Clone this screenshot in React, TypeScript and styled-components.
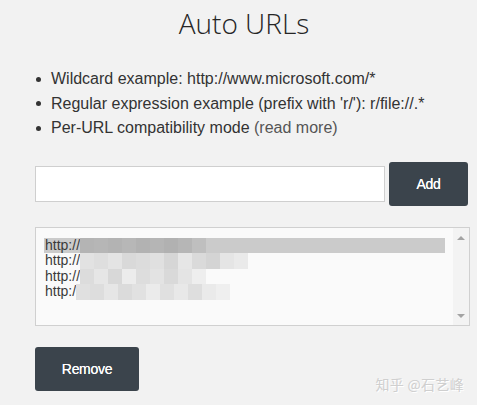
import React from 'react';
import styled, { createGlobalStyle } from 'styled-components';

const GlobalStyle = createGlobalStyle`
  html, body {
    margin: 0;
    padding: 0;
    background: #f2f2f2;
  }
  body {
    font-family: "Liberation Sans", Arial, sans-serif;
    color: #333;
  }
`;

const Page = styled.div`
  position: relative;
  width: 477px;
  height: 405px;
  padding-top: 4px;
  box-sizing: border-box;
  overflow: hidden;
`;

const Title = styled.h1`
  margin: 0;
  padding-left: 11px;
  text-align: center;
  font-family: "Open Sans", sans-serif;
  font-weight: 300;
  font-size: 28px;
  line-height: 38px;
  color: #262626;
`;

const Content = styled.div`
  padding-left: 35px;
`;

const Tips = styled.ul`
  list-style: none;
  margin: 25px 0 0;
  padding: 0;
`;

const Tip = styled.li`
  display: flex;
  align-items: center;
  gap: 10px;
  padding-left: 1px;
  font-size: 16px;
  line-height: 24.5px;
  color: #333;
`;

const Dot = styled.span`
  width: 5px;
  height: 5px;
  border-radius: 50%;
  background: #333;
  flex: none;
`;

const Link = styled.span`
  color: #555;
`;

const AddRow = styled.div`
  display: flex;
  align-items: center;
  gap: 4px;
  margin-top: 21px;
`;

const UrlInput = styled.input`
  width: 350px;
  height: 36px;
  box-sizing: border-box;
  border: 1px solid #cfcfcf;
  background: #fff;
  padding: 0 8px;
  font: 14px "Liberation Sans", Arial, sans-serif;
  outline: none;
`;

const DarkButton = styled.button<{ $w: number }>`
  width: ${(p) => p.$w}px;
  height: 44px;
  border: none;
  border-radius: 3px;
  background: #3b444c;
  color: #fff;
  font: 14px "Liberation Sans", Arial, sans-serif;
  letter-spacing: -0.3px;
  text-shadow: 0 0 0.4px #fff;
  cursor: pointer;
`;

const ListBox = styled.div`
  display: flex;
  width: 435px;
  height: 99px;
  margin-top: 21px;
  box-sizing: border-box;
  border: 1px solid #d0d0d0;
  background: #fafafa;
`;

const Items = styled.div`
  flex: 1;
  padding: 10px 8px 0 8px;
  overflow: hidden;
`;

const Item = styled.div<{ $selected?: boolean }>`
  display: flex;
  height: 15.5px;
  font-size: 14px;
  line-height: 15.5px;
  color: #3a3a3a;
  white-space: nowrap;
  background: ${(p) => (p.$selected ? '#cbcbcb' : 'transparent')};
  padding-left: 1px;
`;

const Mosaic = styled.span`
  display: inline-flex;
  height: 15.5px;
`;

const Cell = styled.span<{ $c: string }>`
  display: inline-block;
  width: 14px;
  height: 100%;
  background: ${(p) => p.$c};
`;

const ScrollBar = styled.div`
  width: 16px;
  display: flex;
  flex-direction: column;
  justify-content: space-between;
  align-items: center;
  padding: 8px 0 7px;
  background: #f3f3f3;
`;

const Arrow = styled.span<{ $down?: boolean }>`
  width: 0;
  height: 0;
  border-left: 4px solid transparent;
  border-right: 4px solid transparent;
  ${(p) =>
    p.$down ? 'border-top: 4px solid #a3a3a3;' : 'border-bottom: 4px solid #a3a3a3;'}
`;

const Footer = styled.div`
  margin-top: 21px;
`;

const Watermark = styled.div`
  position: absolute;
  right: 13px;
  bottom: 11px;
  font-family: "Noto Sans CJK SC", sans-serif;
  font-size: 14px;
  color: #cfcfcf;
  text-shadow: 1px 1px 0 #fff;
  letter-spacing: 0.3px;
`;

const rows: { prefix: string; cells: string[]; selected?: boolean }[] = [
  {
    prefix: 'http://',
    selected: true,
    cells: ['#b4b4b4', '#b6b6b6', '#b3b3b3', '#b7b7b7', '#b2b2b2', '#b5b5b5', '#b1b1b1', '#b6b6b6', '#bfbfbf'],
  },
  {
    prefix: 'http://',
    cells: ['#e2e2e2', '#dedede', '#e4e4e4', '#d9d9d9', '#dcdcdc', '#e0e0e0', '#d6d6d6', '#e6e6e6', '#dadada', '#d4d4d4', '#e5e5e5', '#eaeaea'],
  },
  {
    prefix: 'http://',
    cells: ['#dcdcdc', '#e6e6e6', '#d8d8d8', '#ececec', '#dddddd', '#e3e3e3', '#d9d9d9', '#e4e4e4', '#eeeeee'],
  },
  {
    prefix: 'http:/',
    cells: ['#e0e0e0', '#dddddd', '#e6e6e6', '#dbdbdb', '#e1e1e1', '#ebebeb', '#e0e0e0', '#e8e8e8', '#dedede', '#eaeaea', '#efefef'],
  },
];

export default function App() {
  return (
    <>
      <GlobalStyle />
      <Page>
        <Title>Auto URLs</Title>
        <Content>
          <Tips>
            <Tip>
              <Dot />
              Wildcard example: http://www.microsoft.com/*
            </Tip>
            <Tip>
              <Dot />
              Regular expression example (prefix with 'r/'): r/file://.*
            </Tip>
            <Tip>
              <Dot />
              <span>
                Per-URL compatibility mode <Link>(read more)</Link>
              </span>
            </Tip>
          </Tips>
          <AddRow>
            <UrlInput type="text" />
            <DarkButton $w={79}>Add</DarkButton>
          </AddRow>
          <ListBox>
            <Items>
              {rows.map((r, i) => (
                <Item key={i} $selected={r.selected}>
                  {r.prefix}
                  <Mosaic>
                    {r.cells.map((c, j) => (
                      <Cell key={j} $c={c} />
                    ))}
                  </Mosaic>
                </Item>
              ))}
            </Items>
            <ScrollBar>
              <Arrow />
              <Arrow $down />
            </ScrollBar>
          </ListBox>
          <Footer>
            <DarkButton $w={104}>Remove</DarkButton>
          </Footer>
        </Content>
        <Watermark>知乎 @石艺峰</Watermark>
      </Page>
    </>
  );
}
